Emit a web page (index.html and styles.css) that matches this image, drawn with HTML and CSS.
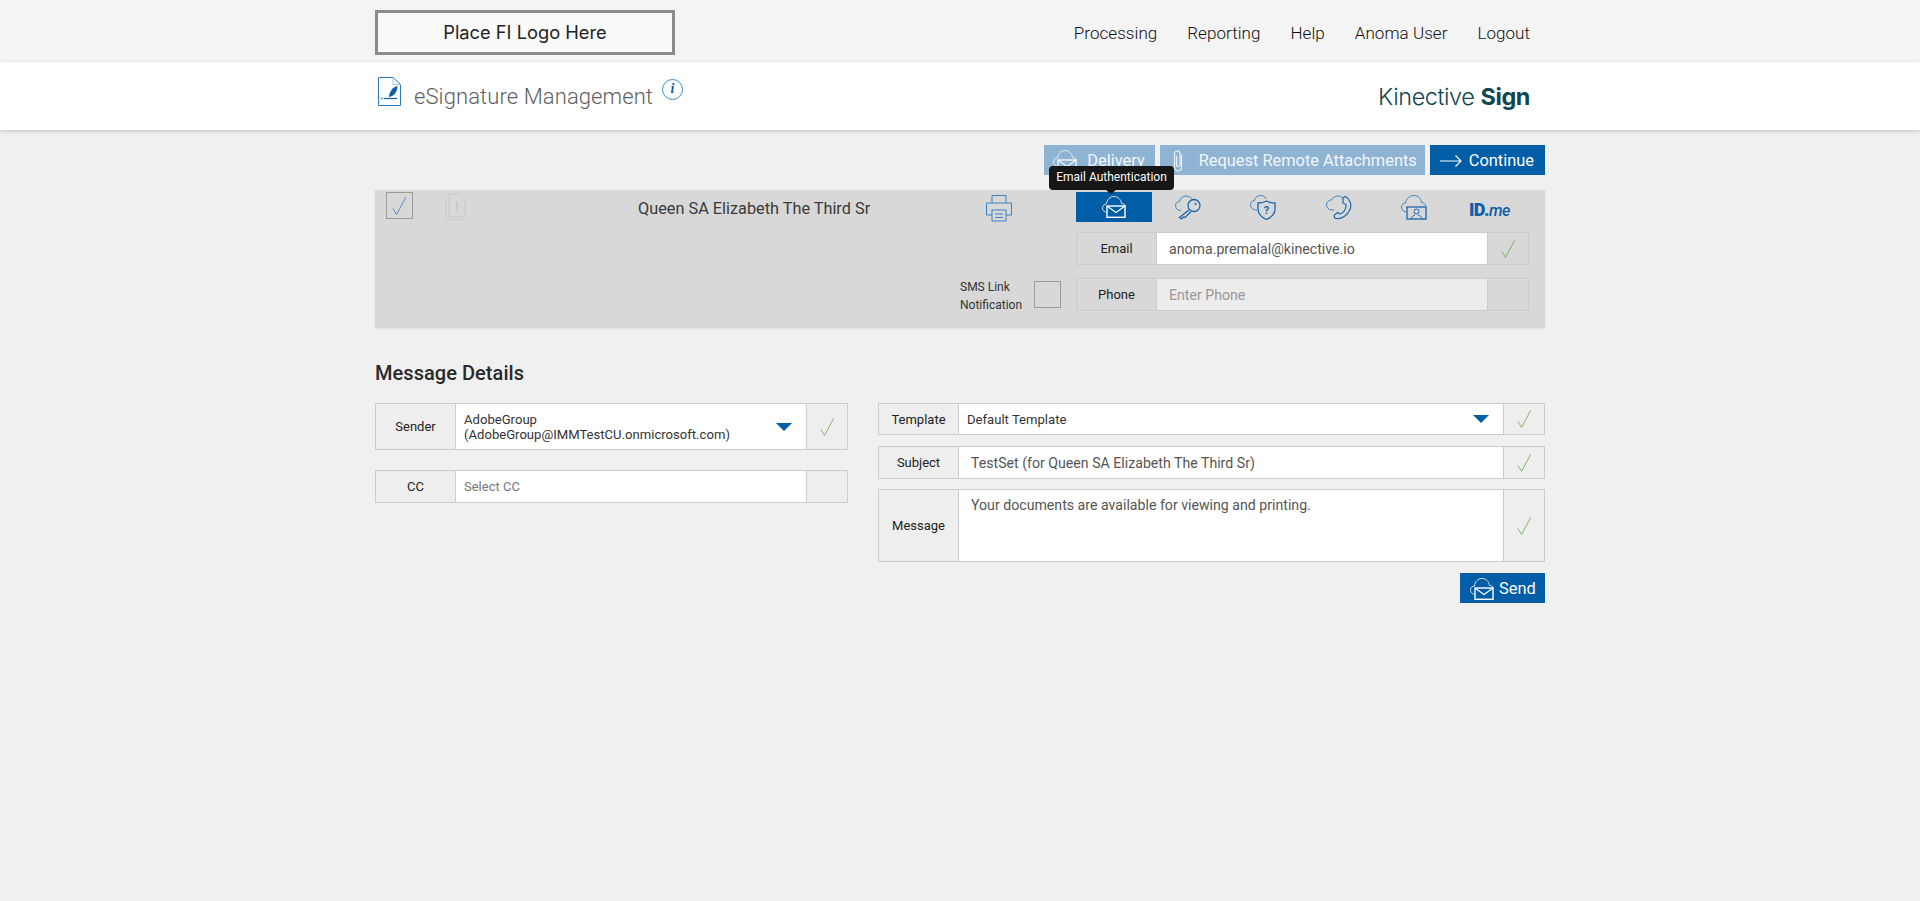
FILE: index.html
```html
<!DOCTYPE html>
<html lang="en">
<head>
    <meta charset="UTF-8">
    <meta name="viewport" content="width=device-width, initial-scale=1.0">
    <title>eSignature Management</title>
    <link rel="stylesheet" href="styles.css">
</head>
<body>
    <!-- shared icons -->
    <svg class="icon_defs" aria-hidden="true">
        <symbol id="i_cloud_mail" viewBox="0 0 24 22">
            <path d="M4 16 H3.5 C1.5 15.5 .5 14 .5 12 C.5 9.5 2.5 8 4.5 8 C5 3.5 8 .5 12 .5 C16 .5 19 3.5 19.5 7.5 C21 7.5 23 8.5 23.5 10" fill="none" stroke="currentColor" stroke-width=".8"/>
            <rect x="5" y="10" width="18" height="11.3" fill="none" stroke="currentColor" stroke-width="1.4"/>
            <path d="M5.3 10.3 L14 16.5 L22.7 10.3" fill="none" stroke="currentColor" stroke-width="1.2"/>
        </symbol>
        <symbol id="i_check" viewBox="0 0 18 24">
            <path d="M1 15 L5.5 22 L16.5 1.5" fill="none" stroke="currentColor" stroke-width="1"/>
        </symbol>
    </svg>

    <div class="top_bar">
        <div class="wrap top_inner">
            <div class="fi_logo">Place FI Logo Here</div>
            <ul class="nav">
                <li>Processing</li>
                <li>Reporting</li>
                <li>Help</li>
                <li>Anoma User</li>
                <li>Logout</li>
            </ul>
        </div>
    </div>

    <div class="title_bar">
        <div class="wrap title_inner">
            <svg class="page_icon" viewBox="0 0 23 29">
                <path d="M.5 .5 H15 L22.5 7.5 V28.5 H.5 Z" fill="none" stroke="#2a78bd" stroke-width="1"/>
                <path d="M15 .5 V7.5 H22.5" fill="none" stroke="#9cc3e4" stroke-width="1"/>
                <path d="M11 20 C11.5 14 15 10 19.5 9 C19.5 14 17 18 13 19.5 Z" fill="#0d5ea6"/>
                <path d="M6 21.5 H19" stroke="#0d5ea6" stroke-width="1.2"/>
                <path d="M3 20.5 L5 22.5 M5 20.5 L3 22.5" stroke="#0d5ea6" stroke-width=".7"/>
            </svg>
            <h1 class="page_title">eSignature Management</h1>
            <span class="info_icon">i</span>
            <div class="brand">Kinective <b>Sign</b></div>
        </div>
    </div>

    <div class="wrap">
        <div class="actions">
            <button class="btn faded btn_delivery">
                <svg class="btn_icon"><use href="#i_cloud_mail"/></svg>Delivery
            </button>
            <button class="btn faded btn_attach">
                <svg class="clip_icon" viewBox="0 0 10 22">
                    <path d="M8.5 5 V16.5 C8.5 19.5 7 21 5 21 C3 21 1.5 19.5 1.5 16.5 V4 C1.5 2 3 1 4.5 1 C6 1 7 2 7 4 V15 C7 16 6 16.5 5 16.5 C4 16.5 3.5 16 3.5 15 V6" fill="none" stroke="currentColor" stroke-width="1.1"/>
                </svg>Request Remote Attachments
            </button>
            <button class="btn btn_continue">
                <svg class="arrow_icon" viewBox="0 0 22 12">
                    <path d="M0 6 H21 M15.5 .5 L21 6 L15.5 11.5" fill="none" stroke="currentColor" stroke-width="1.2"/>
                </svg>Continue
            </button>
        </div>

        <div class="signer">
            <div class="signer_top">
                <span class="check_box"><svg class="box_tick"><use href="#i_check"/></svg></span>
                <svg class="doc_icon" viewBox="0 0 22 28">
                    <path d="M4 1 H15 L20 6 V24 H4 Z M1 4 V27 H17" fill="none" stroke="#c9c9c9" stroke-width="1"/>
                    <path d="M12 9 V18" stroke="#c9c9c9" stroke-width="2"/>
                </svg>
                <span class="signer_name">Queen SA Elizabeth The Third Sr</span>
                <svg class="print_icon" viewBox="0 0 28 28">
                    <g fill="none" stroke="#3a82c4" stroke-width="1">
                        <path d="M7 9 V1.5 H21 V9"/>
                        <path d="M7 21 H1.5 V9 H26.5 V21 H21"/>
                        <rect x="7" y="16" width="14" height="11"/>
                        <path d="M10 20 H18 M10 23.5 H18"/>
                    </g>
                </svg>
                <div class="auth_tabs">
                    <div class="auth_tab active">
                        <svg class="mail_icon"><use href="#i_cloud_mail"/></svg>
                        <span class="tooltip">Email Authentication</span>
                    </div>
                    <div class="auth_tab">
                        <svg class="tab_icon" viewBox="0 0 26 24">
                            <path d="M6 15 C2.5 15 .5 13 .5 10 C.5 7.5 2.5 6 4.5 6 C5 2.5 8 .5 11 .5 C14 .5 16.5 2 17.5 4" fill="none" stroke="#3f85c5" stroke-width="1"/>
                            <circle cx="19" cy="10" r="6" fill="#d8d8d8" stroke="#1a66ad" stroke-width="1.3"/>
                            <circle cx="20.5" cy="8.5" r="1.1" fill="#1a66ad"/>
                            <path d="M14.5 14 L4.5 22 L6.5 23.5 L8.5 21.5 L10 22 L16 16" fill="#d8d8d8" stroke="#1a66ad" stroke-width="1.3"/>
                        </svg>
                    </div>
                    <div class="auth_tab">
                        <svg class="tab_icon" viewBox="0 0 26 25">
                            <path d="M7 15 C3 15 .5 13 .5 9.5 C.5 7 2.5 5.5 4.5 5.500 C5 2.5 7.5 .5 10.5 .5 C13 .5 15 1.5 16 4" fill="none" stroke="#3f85c5" stroke-width="1"/>
                            <path d="M16.5 6 C19 7.5 22 8 25 8 V14 C25 19 21 22.5 16.5 24.5 C12 22.5 8 19 8 14 V8 C11 8 14 7.5 16.5 6 Z" fill="none" stroke="#1a66ad" stroke-width="1.3"/>
                            <text x="16.5" y="19" class="shield_q">?</text>
                        </svg>
                    </div>
                    <div class="auth_tab">
                        <svg class="tab_icon" viewBox="0 0 26 24">
                            <path d="M8 14.5 H6 C2.5 14.5 .5 12 .5 9.5 C.5 6.5 3 4.500 5.5 4.5 C6.5 2 9.5 .5 12 .5 C14 .5 15.5 1 17 2.5" fill="none" stroke="#3f85c5" stroke-width="1"/>
                            <path d="M17 2.5 L19.5 1 C24 3.5 26 9 24 14 C22 19 16 24 10 23 C8.5 22.5 8 21 8.5 19.5 L11.5 17 L14 18.5 C17 17.5 19.5 14.5 20 11 L20 9 L17 7.5 Z" fill="none" stroke="#1a66ad" stroke-width="1.2"/>
                        </svg>
                    </div>
                    <div class="auth_tab">
                        <svg class="tab_icon" viewBox="0 0 26 25">
                            <path d="M5 17 C2 16.5 .5 14.5 .5 12 C.5 9.5 2.5 8 4.5 8 C5 3.5 9 .5 13 .5 C17 .5 20 3.5 20.5 7.5 C22.5 7.5 24.5 9 25 11.5" fill="none" stroke="#3f85c5" stroke-width="1"/>
                            <rect x="6" y="12" width="19" height="12" fill="#d8d8d8" stroke="#1a66ad" stroke-width="1.3"/>
                            <circle cx="15.5" cy="16.5" r="2.5" fill="none" stroke="#1a66ad" stroke-width="1"/>
                            <path d="M10 24 C10.5 21.5 12.5 20.5 14 20 M21 24 C20.5 21.5 18.5 20.5 17 20" fill="none" stroke="#1a66ad" stroke-width="1"/>
                        </svg>
                    </div>
                    <div class="auth_tab">
                        <span class="idme">ID.<i>me</i></span>
                    </div>
                </div>
            </div>
            <div class="signer_row">
                <div class="field auth_field">
                    <span class="field_label">Email</span>
                    <span class="field_value">anoma.premalal@kinective.io</span>
                    <span class="field_check"><svg class="tick"><use href="#i_check"/></svg></span>
                </div>
            </div>
            <div class="signer_row">
                <span class="sms_label">SMS Link<br>Notification</span>
                <span class="sms_box"></span>
                <div class="field auth_field">
                    <span class="field_label">Phone</span>
                    <span class="field_value empty">Enter Phone</span>
                    <span class="field_check"></span>
                </div>
            </div>
        </div>

        <h2 class="section_title">Message Details</h2>

        <div class="details">
            <div class="details_left">
                <div class="field sender_field">
                    <span class="field_label">Sender</span>
                    <span class="field_value select_value">
                        <span>AdobeGroup<br>(AdobeGroup@IMMTestCU.onmicrosoft.com)</span>
                        <span class="caret"></span>
                    </span>
                    <span class="field_check"><svg class="tick"><use href="#i_check"/></svg></span>
                </div>
                <div class="field cc_field">
                    <span class="field_label">CC</span>
                    <span class="field_value placeholder">Select CC</span>
                    <span class="field_check"></span>
                </div>
            </div>
            <div class="details_right">
                <div class="field template_field">
                    <span class="field_label">Template</span>
                    <span class="field_value select_value">
                        <span>Default Template</span>
                        <span class="caret"></span>
                    </span>
                    <span class="field_check"><svg class="tick"><use href="#i_check"/></svg></span>
                </div>
                <div class="field subject_field">
                    <span class="field_label">Subject</span>
                    <span class="field_value">TestSet (for Queen SA Elizabeth The Third Sr)</span>
                    <span class="field_check"><svg class="tick"><use href="#i_check"/></svg></span>
                </div>
                <div class="field message_field">
                    <span class="field_label">Message</span>
                    <span class="field_value">Your documents are available for viewing and printing.</span>
                    <span class="field_check"><svg class="tick"><use href="#i_check"/></svg></span>
                </div>
                <div class="send_row">
                    <button class="btn btn_send">
                        <svg class="btn_icon"><use href="#i_cloud_mail"/></svg>Send
                    </button>
                </div>
            </div>
        </div>
    </div>
</body>
</html>
```
FILE: styles.css
```css
*{
    margin:0;
    padding:0;
    box-sizing: border-box;
}
html,body{
    width:100%;
    height:100%;
}
body{
    background: #f0f0f0;
    font-family: Roboto, "Liberation Sans", sans-serif;
    color: #333;
}
.icon_defs{
    display: none;
}
.wrap{
    width:1170px;
    margin-left:375px;
}

/* top bar */
.top_bar{
    height:62px;
    background: #f4f4f4;
}
.top_inner{
    display: flex;
    justify-content: space-between;
    align-items: flex-start;
    padding-top:10px;
}
.fi_logo{
    width:300px;
    height:45px;
    border:3px solid #8c8c8c;
    background: #fafafa;
    color: #222;
    font-family: Inter, sans-serif;
    font-size:18.3px;
    text-align: center;
    line-height:38px;
}
.nav{
    display: flex;
    gap:30px;
    list-style: none;
    margin-right:15px;
    padding-top:13px;
    font-size:17px;
    font-weight: 300;
    letter-spacing: .05px;
    color: #111;
}

/* title bar */
.title_bar{
    height:68px;
    background: #fff;
    box-shadow: 0 1px 4px rgba(0,0,0,.2);
}
.title_inner{
    display: flex;
    align-items: flex-start;
}
.page_icon{
    width:23px;
    height:29px;
    margin:15px 0 0 3px;
}
.page_title{
    margin:21px 0 0 13px;
    font-size:22px;
    font-weight: 300;
    letter-spacing: .1px;
    color: #5f5f5f;
    line-height:27px;
}
.info_icon{
    width:21px;
    height:21px;
    margin:17px 0 0 9px;
    border:1px solid #3c8ccb;
    border-radius: 50%;
    color: #0d5ea6;
    font-family: "Liberation Serif", serif;
    font-style: italic;
    font-weight: bold;
    font-size:14px;
    line-height:18px;
    text-align: center;
}
.brand{
    margin:20px 15px 0 auto;
    font-family: Inter, sans-serif;
    font-size:23.4px;
    font-weight: 300;
    color: #0f4650;
    letter-spacing: -0.4px;
    line-height:29px;
}
.brand b{
    font-weight: 700;
}

/* action buttons */
.actions{
    display: flex;
    justify-content: flex-end;
    gap:5px;
    padding-top:15px;
}
.btn{
    height:30px;
    display: flex;
    align-items: center;
    border: none;
    padding-top:1px;
    background: #005da6;
    color: #fff;
    font-family: Roboto, sans-serif;
    font-size:16.4px;
}
.btn.faded{
    background: #8fb3d2;
    color: #f2f6fa;
}
.btn_delivery{
    padding-left:9px;
    padding-right:10px;
}
.btn_attach{
    padding-left:13px;
    padding-right:8px;
}
.btn_continue{
    padding-left:10px;
    padding-right:11px;
}
.btn_icon{
    width:24px;
    height:22px;
    margin-right:10px;
}
.clip_icon{
    width:10px;
    height:22px;
    margin-right:16px;
}
.arrow_icon{
    width:22px;
    height:12px;
    margin-right:7px;
}

/* signer panel */
.signer{
    margin-top:15px;
    height:138px;
    background: #d8d8d8;
    box-shadow: 0 1px 2px rgba(0,0,0,.08);
    padding:2px 16px 0 11px;
}
.signer_top{
    display: flex;
    align-items: flex-start;
    height:40px;
}
.check_box{
    width:27px;
    height:27px;
    border:1px solid #9a9a9a;
    display: flex;
    align-items: center;
    justify-content: center;
}
.box_tick{
    width:15px;
    height:20px;
    color: #2a7fd0;
}
.doc_icon{
    width:22px;
    height:28px;
    margin:1px 0 0 32px;
}
.signer_name{
    width:347px;
    margin-left:171px;
    padding-top:7px;
    font-size:16.3px;
    color: #3a3a3a;
}
.print_icon{
    width:28px;
    height:28px;
    margin-top:2px;
}
.auth_tabs{
    display: flex;
    margin-left:auto;
    width:453px;
    height:30px;
}
.auth_tab{
    flex:1;
    position: relative;
    display: flex;
    align-items: center;
    justify-content: center;
    padding-right:4px;
}
.auth_tab.active{
    flex:none;
    width:76px;
    background: #005da6;
    color: #fff;
    padding-right:0;
}
.mail_icon{
    width:24px;
    height:22px;
}
.tab_icon{
    width:26px;
    height:25px;
}
.shield_q{
    font-family: Roboto, sans-serif;
    font-size:11px;
    font-weight: 700;
    fill: #1a66ad;
    text-anchor: middle;
}
.tooltip{
    position: absolute;
    left:-27px;
    top:-26px;
    width:125px;
    height:24px;
    border-radius: 4px;
    background: #161616;
    color: #fff;
    font-size:12px;
    line-height:23px;
    text-align: center;
}
.tooltip::after{
    content: "";
    position: absolute;
    left:57px;
    top:24px;
    border-left:5px solid transparent;
    border-right:5px solid transparent;
    border-top:4px solid #161616;
}
.idme{
    padding-top:4px;
    font-weight: 900;
    font-size:18px;
    letter-spacing: -0.5px;
    color: #0d5ea6;
}
.idme i{
    font-size:16px;
    font-weight: 500;
}
.signer_row{
    display: flex;
    justify-content: flex-end;
    align-items: center;
    height:33px;
    margin-bottom:13px;
}
.sms_label{
    width:74px;
    padding-top:2px;
    font-size:12px;
    line-height:18px;
}
.sms_box{
    width:27px;
    height:27px;
    margin-right:15px;
    border:1px solid #9a9a9a;
}

/* form fields */
.field{
    display: flex;
    border:1px solid #ccc;
    background: #eee;
}
.field_label{
    flex:none;
    width:80px;
    display: flex;
    align-items: center;
    justify-content: center;
    border-right:1px solid #ccc;
    font-size:13px;
    color: #222;
}
.field_value{
    flex:1;
    display: flex;
    align-items: center;
    padding-left:12px;
    background: #fff;
    font-size:14.15px;
    color: #555;
}
.field_value.empty{
    background: #ececec;
    color: #999;
}
.field_value.placeholder{
    padding-left:8px;
    font-size:13px;
    color: #777;
}
.select_value{
    justify-content: space-between;
    padding:0 14px 0 8px;
    font-size:13.1px;
    line-height:15px;
    color: #333;
}
.caret{
    flex:none;
    border-left:8px solid transparent;
    border-right:8px solid transparent;
    border-top:8px solid #005da6;
}
.field_check{
    flex:none;
    width:41px;
    display: flex;
    align-items: center;
    justify-content: center;
    border-left:1px solid #ccc;
}
.tick{
    width:15px;
    height:20px;
    color: #6fa84f;
}
.auth_field{
    width:453px;
    height:33px;
    background: #d8d8d8;
}

/* message details */
.section_title{
    margin-top:33px;
    font-size:20px;
    font-weight: 500;
    letter-spacing: .05px;
    color: #2a2a2a;
    line-height:24px;
}
.details{
    display: flex;
    justify-content: space-between;
    margin-top:18px;
}
.details_left{
    width:473px;
}
.details_right{
    width:667px;
}
.sender_field{
    height:47px;
}
.cc_field{
    height:33px;
    margin-top:20px;
}
.template_field{
    height:32px;
}
.subject_field{
    height:33px;
    margin-top:11px;
}
.message_field{
    height:73px;
    margin-top:10px;
}
.message_field .field_value{
    align-items: flex-start;
    padding-top:7px;
}
.send_row{
    display: flex;
    justify-content: flex-end;
    margin-top:11px;
}
.btn_send{
    width:85px;
    padding-left:10px;
}
.btn_send .btn_icon{
    margin-right:5px;
}
```
